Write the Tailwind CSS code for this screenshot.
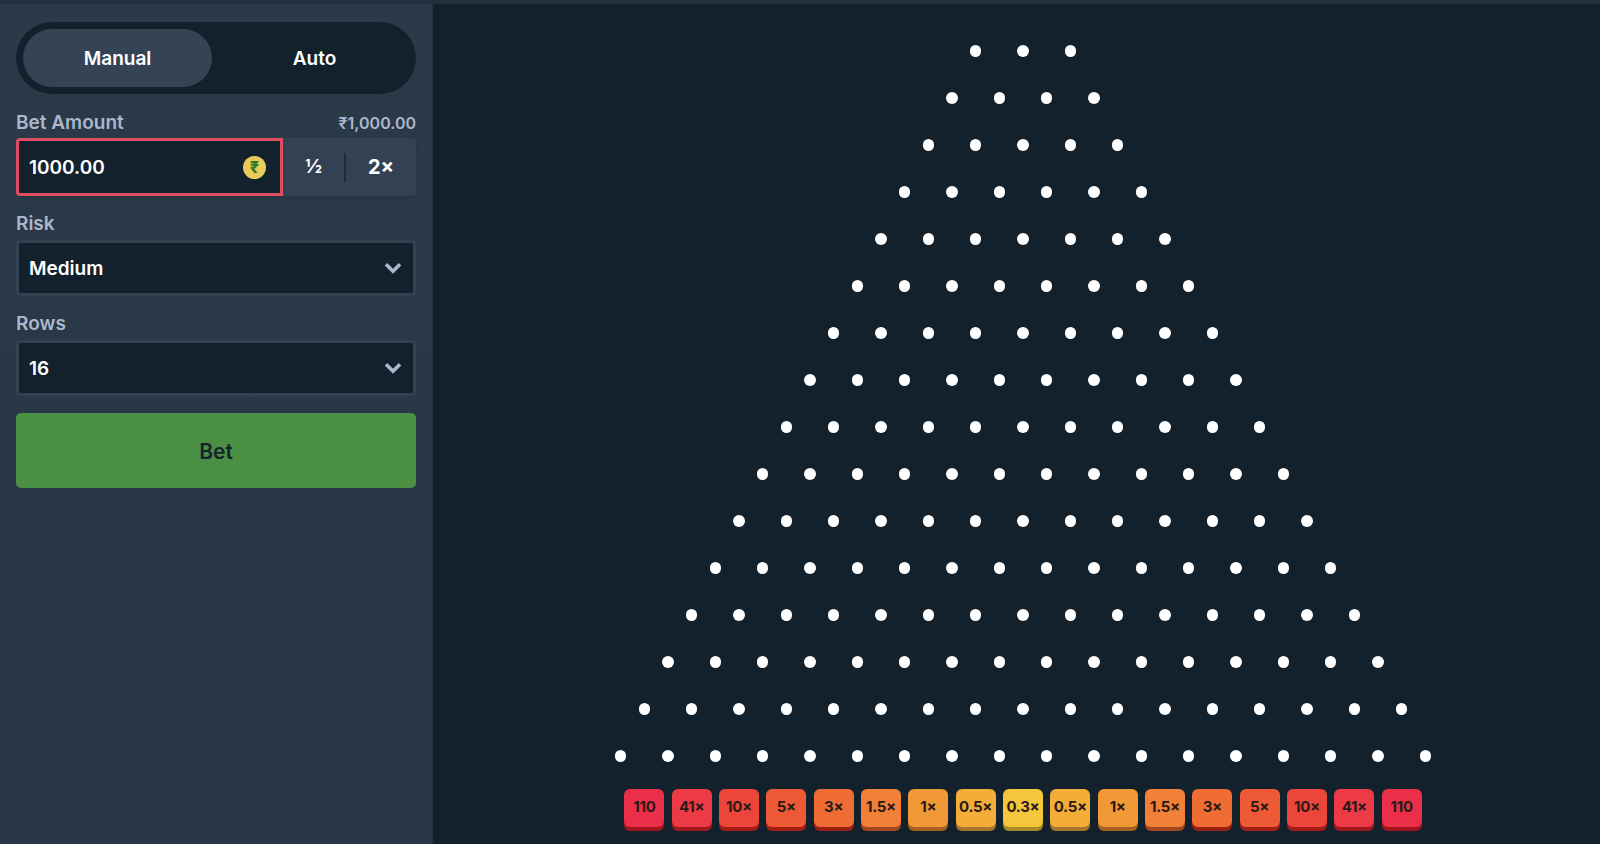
<!DOCTYPE html>
<html><head><meta charset="utf-8"><script src="https://cdn.jsdelivr.net/npm/@tailwindcss/browser@4"></script></head>
<body class="bg-[#13212c]">
<div class="w-[1600px] h-[844px] overflow-hidden flex flex-col bg-[#22303d] font-['Inter','Noto_Sans',sans-serif]">
 <div class="h-[4px] shrink-0"></div>
 <div class="flex flex-1 min-h-0">
  <aside class="w-[433px] shrink-0 bg-gradient-to-b from-[#2b3a48] to-[#263644] pl-4 pr-4 pt-[18px] rounded-tl-[4px] border-r border-[#22303d]">
   <div class="h-[72px] rounded-full bg-[#13212c] p-[7px] flex justify-between font-semibold text-[19px] text-white">
    <div class="w-[189px] pt-[2px] rounded-full bg-[#344454] flex items-center justify-center">Manual</div>
    <div class="w-[189px] pt-[2px] flex items-center justify-center">Auto</div>
   </div>
   <div class="mt-[14px] h-[28px] pt-[2px] flex items-center justify-between font-semibold text-[#adb6cc]">
    <span class="text-[19px]">Bet Amount</span><span class="text-[16px]">₹1,000.00</span>
   </div>
   <div class="mt-[2px] flex h-[58px] rounded-[4px] bg-[#334253] shadow-sm">
    <div class="w-[267px] border-[3px] border-[#df4c64] rounded-l-[4px] bg-[#13212c] flex items-center justify-between pl-[10px] pr-[14px] font-semibold text-[19px] text-white">
     <span class="pt-[2px]">1000.00</span>
     <span class="w-[23px] h-[23px] rounded-full bg-[#e8cb5a] text-[#357a1f] text-[16px] font-extrabold flex items-center justify-center">₹</span>
    </div>
    <div class="flex-1 flex items-center justify-center font-bold text-[19px] text-white"><span>½</span></div>
    <div class="w-[2px] h-[29px] self-center bg-[#1e2c39]"></div>
    <div class="w-[70px] flex items-center justify-center font-bold text-[20px] text-white"><span>2×</span></div>
   </div>
   <div class="mt-[13px] h-[28px] pt-[2px] flex items-center font-semibold text-[19px] text-[#adb6cc]">Risk</div>
   <div class="h-[56px] mt-[3px] rounded-[4px] border-[3px] border-[#324252] bg-[#13212c] flex items-center justify-between pl-[10px] pr-[11px] font-semibold text-[19px] text-white">
    <span class="pt-[2px]">Medium</span>
    <svg class="w-[18px] h-[12px]" viewBox="0 0 18 12" fill="none"><path d="M2 2.2 9 9.2l7-7" stroke="#adb6cc" stroke-width="3.6"/></svg>
   </div>
   <div class="mt-[13px] h-[28px] pt-[2px] flex items-center font-semibold text-[19px] text-[#adb6cc]">Rows</div>
   <div class="h-[56px] mt-[3px] rounded-[4px] border-[3px] border-[#324252] bg-[#13212c] flex items-center justify-between pl-[10px] pr-[11px] font-semibold text-[19px] text-white">
    <span class="pt-[2px]">16</span>
    <svg class="w-[18px] h-[12px]" viewBox="0 0 18 12" fill="none"><path d="M2 2.2 9 9.2l7-7" stroke="#adb6cc" stroke-width="3.6"/></svg>
   </div>
   <div class="mt-[17px] h-[75px] pt-[2px] rounded-[5px] bg-[#4a8f44] flex items-center justify-center font-semibold text-[21px] text-[#18232e]">Bet</div>
  </aside>
  <main class="flex-1 bg-[#13212c] flex flex-col items-center pl-[13px] pt-[23.5px]">
   <div class="flex flex-col items-center [&>div]:h-[47px] [&>div]:flex [&>div]:items-center [&>div]:gap-[36px] [&_i]:block [&_i]:size-[11.33px] [&_i]:rounded-full [&_i]:bg-white">
    <div><i></i><i></i><i></i></div>
    <div><i></i><i></i><i></i><i></i></div>
    <div><i></i><i></i><i></i><i></i><i></i></div>
    <div><i></i><i></i><i></i><i></i><i></i><i></i></div>
    <div><i></i><i></i><i></i><i></i><i></i><i></i><i></i></div>
    <div><i></i><i></i><i></i><i></i><i></i><i></i><i></i><i></i></div>
    <div><i></i><i></i><i></i><i></i><i></i><i></i><i></i><i></i><i></i></div>
    <div><i></i><i></i><i></i><i></i><i></i><i></i><i></i><i></i><i></i><i></i></div>
    <div><i></i><i></i><i></i><i></i><i></i><i></i><i></i><i></i><i></i><i></i><i></i></div>
    <div><i></i><i></i><i></i><i></i><i></i><i></i><i></i><i></i><i></i><i></i><i></i><i></i></div>
    <div><i></i><i></i><i></i><i></i><i></i><i></i><i></i><i></i><i></i><i></i><i></i><i></i><i></i></div>
    <div><i></i><i></i><i></i><i></i><i></i><i></i><i></i><i></i><i></i><i></i><i></i><i></i><i></i><i></i></div>
    <div><i></i><i></i><i></i><i></i><i></i><i></i><i></i><i></i><i></i><i></i><i></i><i></i><i></i><i></i><i></i></div>
    <div><i></i><i></i><i></i><i></i><i></i><i></i><i></i><i></i><i></i><i></i><i></i><i></i><i></i><i></i><i></i><i></i></div>
    <div><i></i><i></i><i></i><i></i><i></i><i></i><i></i><i></i><i></i><i></i><i></i><i></i><i></i><i></i><i></i><i></i><i></i></div>
    <div><i></i><i></i><i></i><i></i><i></i><i></i><i></i><i></i><i></i><i></i><i></i><i></i><i></i><i></i><i></i><i></i><i></i><i></i></div>
   </div>
   <div class="mt-[9.5px] flex gap-[7.33px] text-[15px] font-bold tracking-[-0.3px] text-[#2a1a18] [&>div]:w-[40px] [&>div]:h-[38px] [&>div]:pb-[2px] [&>div]:rounded-[6px] [&>div]:flex [&>div]:items-center [&>div]:justify-center">
    <div class="bg-[#ec2f48] shadow-[0_4px_0_#a3141f]">110</div>
    <div class="bg-[#ec3b46] shadow-[0_4px_0_#a3181c]">41×</div>
    <div class="bg-[#ec463b] shadow-[0_4px_0_#a31c17]">10×</div>
    <div class="bg-[#ee5a35] shadow-[0_4px_0_#a31f14]">5×</div>
    <div class="bg-[#ef6c35] shadow-[0_4px_0_#981f12]">3×</div>
    <div class="bg-[#f08137] shadow-[0_4px_0_#a4461f]">1.5×</div>
    <div class="bg-[#f19837] shadow-[0_4px_0_#a6601f]">1×</div>
    <div class="bg-[#f4ad38] shadow-[0_4px_0_#a6772a]">0.5×</div>
    <div class="bg-[#f5c53b] shadow-[0_4px_0_#ab8a2b]">0.3×</div>
    <div class="bg-[#f4ad38] shadow-[0_4px_0_#a6772a]">0.5×</div>
    <div class="bg-[#f19837] shadow-[0_4px_0_#a6601f]">1×</div>
    <div class="bg-[#f08137] shadow-[0_4px_0_#a4461f]">1.5×</div>
    <div class="bg-[#ef6c35] shadow-[0_4px_0_#981f12]">3×</div>
    <div class="bg-[#ee5a35] shadow-[0_4px_0_#a31f14]">5×</div>
    <div class="bg-[#ec463b] shadow-[0_4px_0_#a31c17]">10×</div>
    <div class="bg-[#ec3b46] shadow-[0_4px_0_#a3181c]">41×</div>
    <div class="bg-[#ec2f48] shadow-[0_4px_0_#a3141f]">110</div>
   </div>
  </main>
 </div>
</div>
</body></html>
